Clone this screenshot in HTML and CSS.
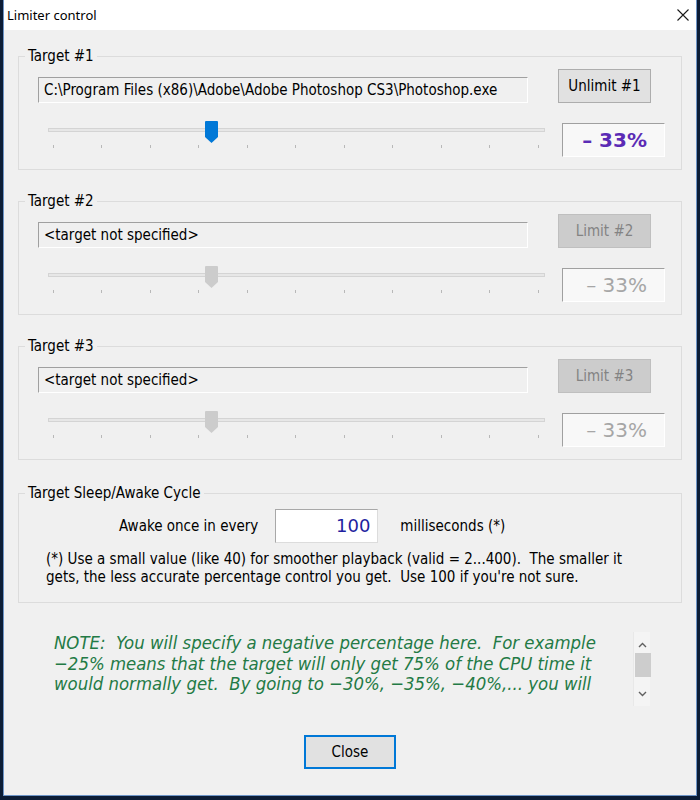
FILE: index.html
```html
<!DOCTYPE html>
<html lang="en">
<head>
  <meta charset="UTF-8" />
  <title>Limiter control</title>
  <link rel="stylesheet" href="styles.css">
</head>
<body>
  <div class="window">
    <div class="titlebar">
      <span class="title">Limiter control</span>
      <svg class="close-x" width="12" height="12" viewBox="0 0 12 12">
        <path d="M0.5 0.5 L11.5 11.5 M11.5 0.5 L0.5 11.5" stroke="#1a1a1a" stroke-width="1.1" fill="none"/>
      </svg>
    </div>

    <div class="content">
      <!-- Target 1 -->
      <fieldset class="group">
        <legend>Target #1</legend>
        <div class="gbody">
          <div class="row top-row">
            <div class="path">C:\Program Files (x86)\Adobe\Adobe Photoshop CS3\Photoshop.exe</div>
            <button class="btn">Unlimit #1</button>
          </div>
          <div class="row slider-row">
            <svg class="slider" width="497" height="28" viewBox="0 0 497 28">
              <rect x="0.5" y="7.5" width="496" height="3" fill="#e7e7e7" stroke="#d4d4d4"/>
              <path d="M5.5 24v3M53.5 24v3M102.5 24v3M150.5 24v3M199.5 24v3M247.5 24v3M296.5 24v3M344.5 24v3M393.5 24v3M441.5 24v3M490.5 24v3" stroke="#b8b8b8"/>
              <path d="M157 1 q0 -1 1 -1 h11 q1 0 1 1 v15 l-6.5 6 l-6.5 -6 z" fill="#0078d7"/>
            </svg>
            <div class="pct on">– 33%</div>
          </div>
        </div>
      </fieldset>

      <!-- Target 2 -->
      <fieldset class="group">
        <legend>Target #2</legend>
        <div class="gbody">
          <div class="row top-row">
            <div class="path">&lt;target not specified&gt;</div>
            <button class="btn" disabled>Limit #2</button>
          </div>
          <div class="row slider-row">
            <svg class="slider" width="497" height="28" viewBox="0 0 497 28">
              <rect x="0.5" y="7.5" width="496" height="3" fill="#e7e7e7" stroke="#d4d4d4"/>
              <path d="M5.5 24v3M53.5 24v3M102.5 24v3M150.5 24v3M199.5 24v3M247.5 24v3M296.5 24v3M344.5 24v3M393.5 24v3M441.5 24v3M490.5 24v3" stroke="#b8b8b8"/>
              <path d="M157 1 q0 -1 1 -1 h11 q1 0 1 1 v15 l-6.5 6 l-6.5 -6 z" fill="#cccccc"/>
            </svg>
            <div class="pct">– 33%</div>
          </div>
        </div>
      </fieldset>

      <!-- Target 3 -->
      <fieldset class="group">
        <legend>Target #3</legend>
        <div class="gbody">
          <div class="row top-row">
            <div class="path">&lt;target not specified&gt;</div>
            <button class="btn" disabled>Limit #3</button>
          </div>
          <div class="row slider-row">
            <svg class="slider" width="497" height="28" viewBox="0 0 497 28">
              <rect x="0.5" y="7.5" width="496" height="3" fill="#e7e7e7" stroke="#d4d4d4"/>
              <path d="M5.5 24v3M53.5 24v3M102.5 24v3M150.5 24v3M199.5 24v3M247.5 24v3M296.5 24v3M344.5 24v3M393.5 24v3M441.5 24v3M490.5 24v3" stroke="#b8b8b8"/>
              <path d="M157 1 q0 -1 1 -1 h11 q1 0 1 1 v15 l-6.5 6 l-6.5 -6 z" fill="#cccccc"/>
            </svg>
            <div class="pct">– 33%</div>
          </div>
        </div>
      </fieldset>

      <!-- Sleep / awake -->
      <fieldset class="group cycle">
        <legend>Target Sleep/Awake Cycle</legend>
        <div class="gbody">
          <div class="row cycle-row">
            <span>Awake once in every</span>
            <div class="num">100</div>
            <span class="unit">milliseconds (*)</span>
          </div>
          <p class="hint">(*) Use a small value (like 40) for smoother playback (valid = 2...400).&nbsp; The smaller it<br>gets, the less accurate percentage control you get.&nbsp; Use 100 if you're not sure.</p>
        </div>
      </fieldset>

      <div class="note">
        <div class="note-text">NOTE:&nbsp; You will specify a negative percentage here.&nbsp; For example<br>−25% means that the target will only get 75% of the CPU time it<br>would normally get.&nbsp; By going to −30%, −35%, −40%,... you will</div>
        <div class="scrollbar">
          <svg width="17" height="74" viewBox="0 0 17 74">
            <path d="M5 15 l3.5 -3.5 l3.5 3.5" stroke="#606060" stroke-width="1.4" fill="none"/>
            <rect x="1" y="21" width="16" height="24" fill="#cdcdcd"/>
            <path d="M5 60 l3.5 3.5 l3.5 -3.5" stroke="#606060" stroke-width="1.4" fill="none"/>
          </svg>
        </div>
      </div>

      <div class="footer">
        <button class="btn default">Close</button>
      </div>
    </div>
  </div>
</body>
</html>
```

FILE: styles.css
```css
* { box-sizing: border-box; }
body {
  margin: 0;
  height: 800px;
  overflow: hidden;
  background: #0c1d36;
  font-family: "DejaVu Sans Condensed", "Liberation Sans", Arial, sans-serif;
  font-size: 15px;
  color: #000;
}
.window {
  margin-left: 3px;
  width: 694px;
  height: 796px;
  border: 1px solid #6d94c6;
  border-top: none;
  background: #f0f0f0;
  display: flex;
  flex-direction: column;
}
.titlebar {
  height: 30px;
  flex-shrink: 0;
  background: #fff;
  display: flex;
  align-items: center;
  justify-content: space-between;
  padding: 0 7px 0 3px;
}
.title {
  font-family: "Noto Sans", sans-serif;
  font-size: 13px;
}
.content {
  padding: 18px 14px 0 14px;
}

/* group boxes */
.group {
  margin: 0 0 23px;
  padding: 0;
  min-width: 0;
  border: 1px solid #dcdcdc;
}
.group.cycle { margin-top: 25px; }
.group legend {
  margin-left: 6px;
  padding: 0 3px;
  line-height: 16px;
}
.gbody { padding: 5px 16px 12px 19px; }
.row { display: flex; }
.top-row { align-items: flex-end; }
.path {
  width: 490px;
  height: 26px;
  padding: 0 5px;
  line-height: 24px;
  white-space: nowrap;
  overflow: hidden;
  border: 1px solid #fff;
  border-top-color: #a0a0a0;
  border-left-color: #a0a0a0;
}
.btn {
  margin-left: 30px;
  width: 93px;
  height: 34px;
  padding: 0;
  font: inherit;
  color: #000;
  background: #e1e1e1;
  border: 1px solid #adadad;
}
.btn:disabled {
  color: #838383;
  background: #cccccc;
  border-color: #bfbfbf;
}
.slider-row { margin-top: 18px; align-items: flex-start; }
.slider { margin-left: 10px; display: block; }
.pct {
  margin: 2px 0 0 17px;
  width: 103px;
  height: 34px;
  padding-right: 17px;
  text-align: right;
  line-height: 32px;
  font-family: "DejaVu Sans", sans-serif;
  font-size: 20px;
  color: #a6a6a6;
  background: #f8f8f8;
  border: 1px solid #fff;
  border-top-color: #a0a0a0;
  border-left-color: #a0a0a0;
}
.pct.on {
  font-weight: bold;
  color: #5b2bb5;
}

/* sleep / awake cycle */
.cycle .gbody { padding: 8px 16px 16px 27px; }
.cycle-row {
  margin-left: 73px;
  align-items: center;
  gap: 17px;
}
.num {
  width: 103px;
  height: 34px;
  padding-right: 7px;
  text-align: right;
  line-height: 32px;
  font-family: "DejaVu Sans", sans-serif;
  font-size: 18px;
  color: #1f1fa0;
  background: #fff;
  border: 1px solid #a8a8a8;
  border-bottom-color: #dcdcdc;
  border-right-color: #dcdcdc;
}
.unit { margin-left: 5px; }
.hint {
  margin: 7px 0 0;
  line-height: 18px;
}

/* note box */
.note {
  margin: 29px 0 0 32px;
  width: 600px;
  height: 74px;
  display: flex;
}
.note-text {
  flex: 1;
  overflow: hidden;
  padding: 1px 0 0 4px;
  font-style: italic;
  font-size: 18.4px;
  line-height: 20.5px;
  color: #237a45;
  white-space: nowrap;
}
.scrollbar {
  width: 17px;
  background: #f4f4f4;
  border-left: 1px solid #e8e8e8;
}
.scrollbar svg { display: block; }

.footer {
  margin-top: 29px;
  display: flex;
  justify-content: center;
}
.btn.default {
  margin: 0;
  width: 92px;
  border: 2px solid #0078d7;
}
```
